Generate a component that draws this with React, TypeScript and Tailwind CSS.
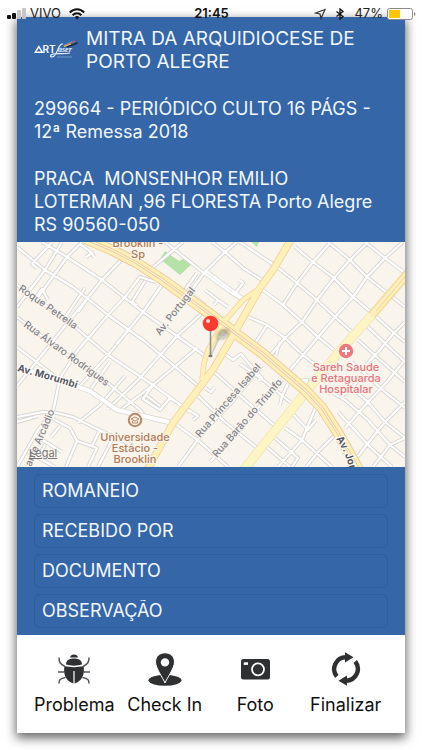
import React from 'react';

const STREETS = [
    // west side, running south-east
    'M17 247 L45 270 L73 287 L108 315 L143 340 L197 385',
    'M42 242 L67 257 L102 280 L143 312 L177 336 L205 356',
    'M17 285 L75 327 L108 355 L153 385 L190 412',
    'M17 317 L60 350 L108 383 L140 410 L146 418',
    'M17 347 L60 380',
    'M80 244 L92 253 L86 257 M92 253 L94 257',
    // west side, running north-east
    'M62 242 L45 270 L17 307',
    'M52 242 L32 264 L37 268',
    'M82 242 L67 257 L36 300',
    'M126 255 L102 280 L73 316 L17 386',
    'M85 288 L66 316 M92 292 L78 312',
    'M156 282 L140 277 L125 297 L108 315 L78 350 L60 378 L53 412',
    'M162 285 L143 312 L108 355 L78 388',
    'M145 281 L132 302 L137 305',
    'M208 308 L177 336 L140 378 L108 409',
    'M197 348 L153 385 L118 412',
    'M110 362 L90 390 M125 376 L100 405 L78 423',
    'M48 300 L42 289 L37 296',
    'M147 396 L160 406 M153 385 L143 399 L160 410 L170 398',
    'M170 398 L198 416 L193 420 M186 408 L175 421',
    // south-west corner
    'M17 417 L43 412 L53 412 L73 417 L95 428 L130 444 M17 422 L38 416',
    'M53 412 L38 430 L17 467',
    'M53 419 L70 428 L77 441 L66 467 M77 441 L97 448 L88 467',
    'M60 426 L51 437 M36 436 L62 452 M28 452 L55 467 M45 445 L38 458',
    'M100 430 L92 446 M112 440 L98 467',
    // between the two avenues
    'M262 365 L232 402 L205 430 L178 467',
    'M282 380 L248 420 L210 462',
    'M177 425 L200 442 L228 467',
    'M198 396 L225 422 L262 452',
    'M212 370 L245 400 L275 426',
    'M222 352 L233 360 L241 354 L251 366 L262 378 L258 381',
    'M240 364 L263 380 L290 402',
    'M205 388 L211 392 L215 387',
    'M280 405 L282 396 L288 384',
    // north centre
    'M165 242 L200 270 L230 292 L243 300',
    'M212 242 L225 252 L243 268 L262 280',
    'M237 242 L225 252 L205 272 L190 292',
    'M205 270 L225 285 L245 300',
    'M183 242 L158 263 L148 272 M197 273 L185 290 L205 305',
    'M240 242 L277 267',
    'M234 295 L243 283 L239 280',
    'M205 290 L218 300 L214 305 M218 300 L228 307',
    // north-east grid
    'M365 242 L385 258 L405 273',
    'M328 242 L350 260 L367 277 L405 307',
    'M295 247 L313 262 L334 278 L353 297 L372 313 L394 333 L405 342',
    'M277 267 L297 283 L317 300 L335 317 L352 332',
    'M260 288 L283 305 L302 322 L318 337 L334 350',
    'M248 317 L267 325 L285 338 L303 355 L328 375',
    'M330 243 L313 262 L297 283 L283 305',
    'M368 242 L350 260 L334 278 L317 300 L302 322 L285 338 L268 358',
    'M403 242 L385 258 L367 277 L353 297 L335 317 L318 337 L303 355 L290 370',
    'M405 322 L394 333 L378 352 L365 366',
    'M267 325 L254 345 M280 342 L276 355 M368 327 L392 350 L405 362',
    // south-east grid
    'M358 340 L378 358 L405 382',
    'M352 362 L385 392 L405 408',
    'M352 388 L368 402 L385 422 L405 438',
    'M333 393 L345 400 L368 420 L390 445 L405 457',
    'M338 412 L352 427 L370 447 L392 467',
    'M405 360 L385 384 L368 402 L345 428',
    'M405 402 L385 422 L365 447 L350 467',
    'M405 438 L390 445 L373 467 M340 398 L352 388 L360 378',
    'M293 414 L308 430 L316 420 M285 428 L302 440 L332 467',
    'M267 447 L290 467 M318 402 L302 440 L278 467',
    'M338 432 L318 452 L306 467 M275 438 L298 458 L292 467',
];

const MAIN_AVENUE = 'M84 238 L112 250 L137 263 L163 280 L210 314 L235 333 L262 353 L305 390 L322 408 L338 433 L360 472';
const NORTH_AVENUE = 'M292 238 L273 270 L260 288 L233 335 L214 368 L173 423 L146 472';
const NORTH_BRANCH = 'M260 288 L243 300 L223 323 L208 350 L204 363 L202 380';
const EAST_AVENUE = 'M409 272 L372 315 L338 353 L305 393 L242 472';

const CityMap = () => (
    <svg
        className="block w-full h-[225px]"
        viewBox="17 242 388 225"
        preserveAspectRatio="xMidYMid slice"
        fill="none"
        fontFamily='Inter, "Liberation Sans", sans-serif'
    >
        <defs>
            <path id="morumbi" d="M17 371 L50 380 L82 390" />
            <path id="jorn" d="M336 439 Q346 452 352 478" />
        </defs>
        <rect x="17" y="242" width="388" height="225" fill="#f9f5ed" />
        <path d="M165 251 L179 261 L187 257 L193 263 L180 275 L160 259 Z M251 242 L259 242 L257 247 Z" fill="#b4e2a7" />

        <path d={STREETS.join(' ')} stroke="#d8d5d1" strokeWidth="4" strokeLinejoin="round" />
        <path d={STREETS.join(' ')} stroke="#ffffff" strokeWidth="2.2" strokeLinejoin="round" />
        <path d="M17 367 L50 377 L90 391 L117 410 L143 416 L177 424" stroke="#d9d7d3" strokeWidth="5.4" />
        <path d="M17 367 L50 377 L90 391 L117 410 L143 416 L177 424" stroke="#ffffff" strokeWidth="4" />
        <path d="M292 380 L309 378 L306 388 Z" fill="#fff" stroke="#dedbd6" />

        <path d={EAST_AVENUE} stroke="#efe4b4" strokeWidth="9.5" />
        <path d={EAST_AVENUE} stroke="#fdf5c4" strokeWidth="8" />
        <path d="M409 272 L372 315" stroke="#f2cf92" strokeWidth="8" />
        <path d="M409 272 L372 315" stroke="#fdf0b8" strokeWidth="6.4" />
        <path d="M409 272 L376 311" stroke="#f2cf92" strokeWidth="1" />
        <path d={NORTH_BRANCH} stroke="#f2cf92" strokeWidth="5.4" />
        <path d={NORTH_AVENUE} stroke="#f2cf92" strokeWidth="7.6" />
        <path d={MAIN_AVENUE} stroke="#f3c995" strokeWidth="11" strokeLinejoin="round" />
        <path d={NORTH_BRANCH} stroke="#fdf0b8" strokeWidth="4" />
        <path d={NORTH_AVENUE} stroke="#fdf0b8" strokeWidth="6" />
        <path d={MAIN_AVENUE} stroke="#fdf0b8" strokeWidth="9.2" strokeLinejoin="round" />
        <path d={MAIN_AVENUE} stroke="#f3c995" strokeWidth="3" strokeLinejoin="round" />
        <path d={MAIN_AVENUE} stroke="#fbf3df" strokeWidth="1.2" strokeLinejoin="round" />

        <g fill="#85838a" stroke="#f9f5ed" strokeWidth="2" paintOrder="stroke" fontSize="10" fontWeight="500">
            <text transform="translate(18 290) rotate(35)">Roque Petrella</text>
            <text transform="translate(23 326) rotate(36)">Rua Álvaro Rodrigues</text>
            <text transform="translate(160 336) rotate(-52)">Av. Portugal</text>
            <text transform="translate(200 438) rotate(-49)">Rua Princesa Isabel</text>
            <text transform="translate(217 458) rotate(-49)">Rua Barão do Triunfo</text>
            <text transform="translate(31 467) rotate(-67)">ante Arcádio</text>
        </g>
        <g fill="#55565a" stroke="#ffffff" strokeWidth="2" paintOrder="stroke" fontSize="10" fontWeight="700">
            <text><textPath href="#morumbi">Av. Morumbi</textPath></text>
            <text><textPath href="#jorn">Av. Jor</textPath></text>
        </g>
        <g fill="#b27c57" stroke="#f9f5ed" strokeWidth="2" paintOrder="stroke" fontSize="11" fontWeight="500" textAnchor="middle">
            <text x="138" y="247">Brooklin -</text>
            <text x="138" y="258">Sp</text>
            <text x="135" y="441">Universidade</text>
            <text x="135" y="452">Estácio -</text>
            <text x="135" y="463">Brooklin</text>
        </g>
        <g fill="#e8747b" stroke="#f9f5ed" strokeWidth="2" paintOrder="stroke" fontSize="11" fontWeight="500" textAnchor="middle">
            <text x="346" y="371">Sareh Saude</text>
            <text x="346" y="382">e Retaguarda</text>
            <text x="346" y="393">Hospitalar</text>
        </g>

        <circle cx="346" cy="351" r="7.2" fill="#ee777d" />
        <path d="M346 347 V355 M342 351 H350" stroke="#fff" strokeWidth="2" />
        <circle cx="135" cy="420" r="6.2" fill="#faf3ea" stroke="#b98763" strokeWidth="2" />
        <path d="M131 419 L135 417 L139 419 L135 421 Z M132.500 421 V423 H137.500 V421" stroke="#b98763" strokeWidth="1" />

        {/* dropped pin and its shadow */}
        <path d="M211 355 L219 338" stroke="#8d8973" strokeWidth="2" opacity="0.35" />
        <ellipse cx="223" cy="334" rx="9" ry="6" transform="rotate(-30 223 334)" fill="#77725f" opacity="0.14" />
        <ellipse cx="223" cy="334" rx="7" ry="4.5" transform="rotate(-30 223 334)" fill="#77725f" opacity="0.18" />
        <ellipse cx="223" cy="333" rx="5" ry="3" transform="rotate(-30 223 333)" fill="#77725f" opacity="0.22" />
        <path d="M210.500 330 V355" stroke="#8f9193" strokeWidth="1.600" />
        <ellipse cx="210.500" cy="356" rx="2" ry="1.200" fill="#77787a" />
        <circle cx="210.500" cy="323.500" r="7.800" fill="#fb3a30" />
        <circle cx="208" cy="321" r="2" fill="#ffd9d5" />
    </svg>
);

const Logo = () => (
    <svg className="w-[45px] h-[20px] shrink-0 mt-3" viewBox="0 0 45 20" fill="none">
        <path d="M1.200 13.300 L4.800 7.600 L8.400 13.300 Z" stroke="#fff" strokeWidth="1.400" />
        <text x="8.500" y="14" fontFamily='Inter, "Liberation Sans", sans-serif' fontSize="10" fontWeight="600" fill="#fff">RT</text>
        <text x="24" y="13" fontFamily='"Liberation Serif", serif' fontSize="8" fontStyle="italic" fontWeight="700" fill="#e6eefb">aser</text>
        <path d="M29 5 C25 4 24 12 21 16 C19 19 15 18 17 16 C20 13 25 16 36 14" stroke="#e6eefb" strokeWidth="1.200" />
        <path d="M29.500 6.500 L38 2.500" stroke="#39a6d9" strokeWidth="1" />
        <path d="M30 7 L41 2" stroke="#e0605a" strokeWidth="1.200" />
        <path d="M33 8 L43.500 4" stroke="#1f2839" strokeWidth="1.500" />
        <path d="M30 7.500 L37 5" stroke="#f1c84b" strokeWidth="1" />
        <path d="M23 18 H38" stroke="#7fa3d2" strokeWidth="0.800" />
    </svg>
);

const BugIcon = () => (
    <svg className="w-8 h-8" viewBox="0 0 32 32" fill="#2f3032">
        <path d="M12 4.500 C12.500 0.500 19.500 0.500 20 4.500 Z" />
        <path d="M8 11.500 C8 7.500 11 5.500 16 5.500 C21 5.500 24 7.500 24 11.500 C19 13 13 13 8 11.500 Z" />
        <path d="M6.500 13 C12 14.500 20 14.500 25.500 13 C27 20 24.500 27 19 29.500 L16.600 30.500 V18 H15.400 V30.500 L13 29.500 C7.500 27 5 20 6.500 13 Z" />
        <path
            d="M1 4.500 C1 9 2 11 7 13.500 M31 4.500 C31 9 30 11 25 13.500 M0 19 H6 M26 19 H32 M1 30.500 C1 27 2 25.500 7.500 24.500 M31 30.500 C31 27 30 25.500 24.500 24.500"
            fill="none"
            stroke="#55565a"
            strokeWidth="1.500"
        />
    </svg>
);

const CheckInIcon = () => (
    <svg className="w-[34px] h-[34px]" viewBox="0 0 34 34">
        <ellipse cx="17" cy="28.300" rx="16.500" ry="5.500" fill="#2f3032" />
        <path
            d="M17 31 C15 26 7.500 16 7.500 10 C7.500 4.500 11.500 0.800 17 0.800 C22.500 0.800 26.500 4.500 26.500 10 C26.500 16 19 26 17 31 Z"
            fill="#2f3032"
            stroke="#fff"
            strokeWidth="1"
        />
        <circle cx="17" cy="10.400" r="4.200" fill="#fff" />
    </svg>
);

const CameraIcon = () => (
    <svg className="w-[29px] h-[21px]" viewBox="0 0 29 21">
        <rect width="29" height="20.500" rx="2.500" fill="#2f3032" />
        <rect x="2.700" y="3.300" width="4.300" height="2.600" fill="#fff" />
        <circle cx="17" cy="10.300" r="6" fill="none" stroke="#fff" strokeWidth="1.800" />
    </svg>
);

const FinishIcon = () => (
    <svg className="w-[30px] h-[34px]" viewBox="0 0 30 34">
        <g id="arc">
            <path d="M5.800 24.500 A11.800 11.800 0 0 1 15 5.300" fill="none" stroke="#2f3032" strokeWidth="4.400" />
            <path d="M14 0.300 L22.500 5.300 L14 10.600 Z" fill="#2f3032" />
        </g>
        <use href="#arc" transform="rotate(180 15 17)" />
    </svg>
);

const FIELDS = ['ROMANEIO', 'RECEBIDO POR', 'DOCUMENTO', 'OBSERVAÇÃO'];

const ACTIONS = [
    { label: 'Problema', icon: <BugIcon /> },
    { label: 'Check In', icon: <CheckInIcon /> },
    { label: 'Foto', icon: <CameraIcon /> },
    { label: 'Finalizar', icon: <FinishIcon /> },
];

const StatusBar = () => (
    <div className="grid grid-cols-3 items-center h-[17px] pt-[7px] pl-[7px] pr-1.5 text-[13px] leading-none text-[#222]">
        <div className="flex items-center gap-1">
            <svg className="w-[19px] h-3" viewBox="0 0 19 12">
                <rect x="0" y="7" width="4" height="4" rx="1" fill="#111" />
                <rect x="5" y="5" width="4" height="6" rx="1" fill="#111" />
                <rect x="10" y="2" width="4" height="9" rx="1" fill="#c6c6c6" />
                <rect x="15" y="0" width="4" height="11" rx="1" fill="#c6c6c6" />
            </svg>
            <span>VIVO</span>
            <svg className="w-4 h-3 ml-1" viewBox="0 0 16 12" fill="none" stroke="#111" strokeWidth="2">
                <path d="M0.800 4.500 C5 0 11 0 15.200 4.500 M3.600 7.200 C6 4.600 10 4.600 12.400 7.200" />
                <path d="M8 11.500 L5.800 9 C7 7.800 9 7.800 10.200 9 Z" fill="#111" stroke="none" />
            </svg>
        </div>
        <div className="text-center font-semibold text-[#111]">21:45</div>
        <div className="flex items-center justify-end gap-1">
            <svg className="w-3 h-3" viewBox="0 0 12 12" fill="none" stroke="#333" strokeWidth="1.200">
                <path d="M11 1.500 L1.500 5 L6 6 L7 10.500 Z" />
            </svg>
            <svg className="w-3 h-3 ml-1" viewBox="0 0 12 12" fill="none" stroke="#111" strokeWidth="1.300">
                <path d="M2.500 3.500 L9 8.500 L6 11 V1 L9 3.500 L2.500 8.500" />
            </svg>
            <span className="ml-1">47%</span>
            <svg className="w-[29px] h-3" viewBox="0 0 29 12">
                <rect x="0.500" y="0.500" width="25" height="11" rx="2" fill="#fff" stroke="#8a8a8a" />
                <rect x="2" y="2" width="11" height="8" fill="#fdc60a" />
                <path d="M27 4 V8 Q28.500 7.500 28.500 6 Q28.500 4.500 27 4 Z" fill="#8a8a8a" />
            </svg>
        </div>
    </div>
);

export default function App() {
    return (
        <div className="min-h-screen bg-white pb-[17px] font-[Inter,'Liberation_Sans',sans-serif]">
            <StatusBar />
            <main className="mx-[17px] bg-white shadow-[0_4px_10px_1px_rgba(0,0,0,0.6)]">
                <header className="bg-[#3566a7] text-[#f1f6fd] pt-2.5 pb-1.5 px-[17px] text-[18px] leading-[23px]">
                    <div className="flex gap-[7px]">
                        <Logo />
                        <h1 className="text-[19px]">
                            MITRA DA ARQUIDIOCESE DE
                            <br />
                            PORTO ALEGRE
                        </h1>
                    </div>
                    <p className="mt-6">
                        299664 - PERIÓDICO CULTO 16 PÁGS -
                        <br />
                        12ª Remessa 2018
                    </p>
                    <p className="mt-6 whitespace-pre-wrap">
                        {'PRACA  MONSENHOR EMILIO\nLOTERMAN ,96 FLORESTA Porto Alegre\nRS 90560-050'}
                    </p>
                </header>

                <section className="relative overflow-hidden">
                    <CityMap />
                    <a href="#legal" className="absolute left-3 bottom-2 text-[11px] leading-3 text-[#77777a] underline">
                        Legal
                    </a>
                </section>

                <form className="flex flex-col gap-1.5 bg-[#3566a7] px-[17px] py-[7px]">
                    {FIELDS.map((field) => (
                        <input
                            key={field}
                            type="text"
                            aria-label={field}
                            placeholder={field}
                            className="w-full h-[34px] px-[7px] pb-0.5 rounded-md border border-[#2f5d9d] bg-transparent text-[18px] text-[#f1f6fd] placeholder:text-[#f1f6fd] outline-none"
                        />
                    ))}
                </form>

                <nav className="grid grid-cols-4 pl-3 pr-3.5 h-[98px]">
                    {ACTIONS.map((action) => (
                        <button key={action.label} type="button" className="flex flex-col items-center pt-4 text-[18px] leading-6 text-[#111] whitespace-nowrap">
                            <span className="flex items-center justify-center h-[36px] mb-1.5">{action.icon}</span>
                            {action.label}
                        </button>
                    ))}
                </nav>
            </main>
        </div>
    );
}
